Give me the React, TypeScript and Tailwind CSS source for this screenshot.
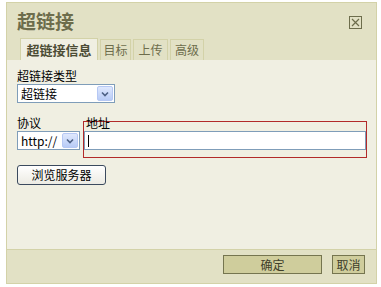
import React from "react";

const font = { fontFamily: '"Noto Sans CJK SC", "Liberation Sans", sans-serif' };

function XpArrow() {
  return (
    <span className="flex h-[15px] w-[16px] items-center justify-center rounded-[2px] border border-[#b6c8f4] bg-gradient-to-b from-[#dfe8fd] to-[#b8cbf6]">
      <svg width="8" height="6" viewBox="0 0 8 6">
        <path d="M1 1.5 L4 4.5 L7 1.5" fill="none" stroke="#4d6185" strokeWidth="1.6" />
      </svg>
    </span>
  );
}

function Select({ value, width }: { value: string; width: string }) {
  return (
    <div className={`flex h-[19px] items-center justify-between border border-[#7f9db9] bg-white pl-[3px] pr-[1px] ${width}`}>
      <span className="text-[12px] leading-none text-black">{value}</span>
      <XpArrow />
    </div>
  );
}

export default function App() {
  return (
    <div className="h-[287px] w-[381px] overflow-hidden bg-white pl-[6px] pt-[2px]" style={font}>
      <div className="flex h-[282px] w-[371px] flex-col border border-[#d3d2a8] bg-[#e2e1c5]">
        {/* Title */}
        <div className="flex items-start justify-between pl-[10px] pr-[14px] pt-[5px]">
          <span className="text-[19px] font-bold leading-[26px] text-[#6d6d4c]">超链接</span>
          <span className="mt-[8px] flex h-[13px] w-[13px] items-center justify-center border border-[#6d6d4c]">
            <svg width="9" height="9" viewBox="0 0 9 9">
              <path d="M1 1 L8 8 M8 1 L1 8" stroke="#6d6d4c" strokeWidth="1.2" />
            </svg>
          </span>
        </div>

        {/* Tabs */}
        <div className="mt-[4px] flex items-end gap-[2px] pl-[13px] text-[12px] leading-none">
          <span className="flex h-[22px] w-[78px] items-center justify-center border border-b-0 border-[#d3d2a8] bg-[#f0efe2] text-[13px] font-bold text-[#4c4c35]">
            超链接信息
          </span>
          <span className="flex h-[21px] w-[31px] items-center justify-center border border-b-0 border-[#d3d2a8] text-[#6d6d4c]">目标</span>
          <span className="flex h-[21px] w-[35px] items-center justify-center border border-b-0 border-[#d3d2a8] text-[#6d6d4c]">上传</span>
          <span className="flex h-[21px] w-[34px] items-center justify-center border border-b-0 border-[#d3d2a8] text-[#6d6d4c]">高级</span>
        </div>

        {/* Content */}
        <div className="flex h-[190px] flex-col border-b border-[#d3d2a8] bg-[#f0efe2] pl-[10px] pr-[10px] pt-[8px] text-[12px] text-black">
          <span className="leading-[16px]">超链接类型</span>
          <Select value="超链接" width="w-[98px]" />

          <div className="mt-[12px] flex items-start gap-[4px]">
            <div className="flex flex-col">
              <span className="leading-[16px]">协议</span>
              <Select value="http://" width="w-[63px]" />
            </div>
            <div className="flex flex-1 flex-col">
              <span className="relative z-10 pl-[2px] leading-[16px]">地址</span>
              <div className="relative">
                <div className="flex h-[19px] items-center border border-[#7f9db9] bg-white pl-[3px]">
                  <span className="h-[12px] w-px bg-black" />
                </div>
                <div className="pointer-events-none absolute bottom-[-8px] left-[-1px] right-[-1px] top-[-10px] border border-[#b22a2a]" />
              </div>
            </div>
          </div>

          <button className="mt-[15px] flex h-[20px] w-[89px] items-center justify-center rounded-[3px] border border-[#3b4a5e] bg-gradient-to-b from-white to-[#ecebe3] text-[12px] leading-none text-black">
            浏览服务器
          </button>
        </div>

        {/* Footer */}
        <div className="flex flex-1 items-start justify-end gap-[10px] pr-[11px] pt-[5px] text-[12px] leading-none">
          <button className="flex h-[19px] w-[99px] items-center justify-center border border-[#75754f] bg-[#cfcd9c] text-[#3e3e2a]">确定</button>
          <button className="flex h-[19px] w-[33px] items-center justify-center border border-[#75754f] bg-[#cfcd9c] text-[#3e3e2a]">取消</button>
        </div>
      </div>
    </div>
  );
}
